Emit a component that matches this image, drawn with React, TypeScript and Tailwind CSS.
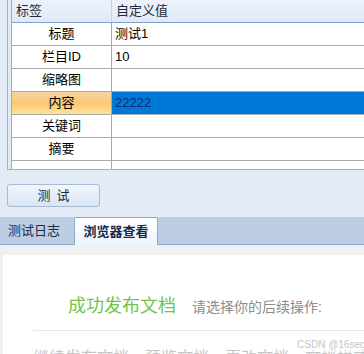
import React from 'react';

const rows = [
  { label: '标题', value: '测试1' },
  { label: '栏目ID', value: '10' },
  { label: '缩略图', value: '' },
  { label: '内容', value: '22222', active: true },
  { label: '关键词', value: '' },
  { label: '摘要', value: '' },
  { label: '作者', value: '' },
];

const App: React.FC = () => {
  return (
    <div
      className="w-[364px] h-[354px] overflow-hidden bg-[#e3ebf6] flex flex-col text-[13px] text-black"
      style={{ fontFamily: '"Liberation Sans", "Noto Sans CJK SC", sans-serif' }}
    >
      {/* property grid */}
      <div className="ml-[7px] h-[170px] border-l border-b border-[#a3b3c9] pl-[3px] shrink-0">
        <div className="h-[169px] overflow-hidden border-l border-[#a9a9a9] bg-white">
          <div className="flex h-[23px] border-b border-[#7f9fd1] bg-gradient-to-b from-[#edf3fb] to-[#dfe9f6]">
            <div className="w-[100px] border-r border-[#c5d3e8] pl-[4px] leading-[22px] text-[#1e2a3c]">标签</div>
            <div className="flex-1 pl-[4px] leading-[22px] text-[#1e2a3c]">自定义值</div>
          </div>
          {rows.map((r, i) => (
            <div key={r.label} className="flex h-[23px] border-b border-[#a9a9a9]">
              <div
                className={`w-[100px] border-r border-[#a9a9a9] text-center ${
                  i === rows.length - 1 ? 'leading-[30px]' : 'leading-[22px]'
                } ${r.active ? 'bg-gradient-to-b from-[#f6d3a2] via-[#fbc873] to-[#fde49a]' : ''}`}
              >
                {r.label}
              </div>
              <div
                className={`flex-1 pl-[3px] leading-[22px] ${
                  r.active ? 'bg-[#0078d7] text-[#0b2b6b]' : ''
                }`}
              >
                {r.value}
              </div>
            </div>
          ))}
        </div>
      </div>

      {/* button */}
      <div className="h-[47px] shrink-0 flex items-center pl-[7px] pt-[4px]">
        <button className="w-[93px] h-[23px] rounded-[3px] border border-[#a7b9d3] bg-gradient-to-b from-[#f1f6fc] to-[#d9e5f3] text-[13px] text-[#1e2a3c] tracking-[6px] pl-[6px]">
          测试
        </button>
      </div>

      {/* tabs */}
      <div className="h-[28px] shrink-0 flex items-end bg-[#bccde4] border-b border-[#8ea8cf]">
        <div className="h-[27px] px-[8px] leading-[27px] text-[#1f2d44]">测试日志</div>
        <div className="ml-[6px] w-[84px] h-[28px] -mb-px border border-b-0 border-[#8ea8cf] rounded-t-[2px] bg-gradient-to-b from-white to-[#eef4fc] text-center leading-[28px] font-bold text-[#15294b]">
          浏览器查看
        </div>
      </div>

      {/* browser view */}
      <div className="flex-1 bg-[#f0f0f0] pt-[10px] pl-[3px] flex">
        <div className="flex-1 bg-white relative flex flex-col">
          <div className="pt-[39px] flex items-baseline">
            <span className="ml-[65px] text-[18px] text-[#72c34a] leading-[24px]">成功发布文档</span>
            <span className="ml-[16px] text-[14px] text-[#8c8c8c]">请选择你的后续操作:</span>
          </div>
          <div className="ml-[30px] mt-[12px] border-t border-[#e8e8e8]" />
          <div className="ml-[30px] mt-[17px] flex gap-[16px] text-[16px] text-[#c6c6c6] whitespace-nowrap leading-[20px]">
            <span>继续发布文档</span>
            <span>预览文档</span>
            <span>更改文档</span>
            <span>文档样式</span>
          </div>
          <span className="absolute right-[4px] top-[82px] text-[10px] text-[#c4c4c4] bg-white/60">CSDN @16sec</span>
        </div>
      </div>
    </div>
  );
};

export default App;
